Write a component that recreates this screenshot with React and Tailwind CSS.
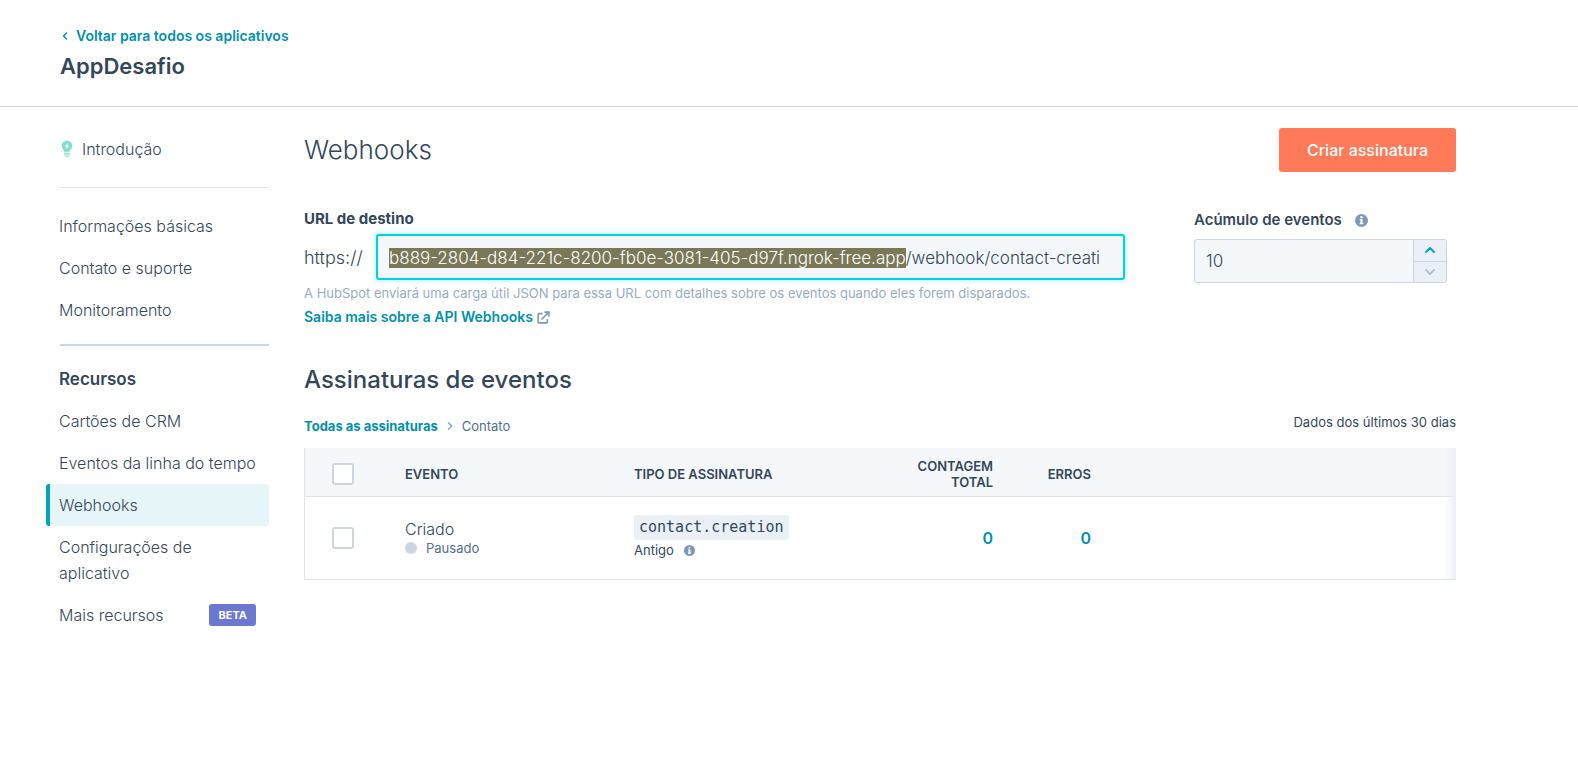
import { useEffect, useRef } from "react";

const selectedHost = "b889-2804-d84-221c-8200-fb0e-3081-405-d97f.ngrok-free.app";
const path = "/webhook/contact-creati";

function InfoIcon({ className }) {
  return (
    <svg viewBox="0 0 14 14" className={className} aria-hidden="true">
      <circle cx="7" cy="7" r="7" fill="#7c98b6" />
      <circle cx="7" cy="3.5" r="1.3" fill="#fff" />
      <path d="M5 5.600h3.100v4h.9V11H5V9.600h.9V7H5z" fill="#fff" />
    </svg>
  );
}

function BulbIcon() {
  return (
    <svg viewBox="0 0 12 18" className="h-[18px] w-3" aria-hidden="true">
      <path
        d="M6 .5A5.200 5.200 0 0 0 .8 5.700c0 1.800.9 3 1.700 4 .5.7.7 1.300.8 2.100h5.400c.1-.8.300-1.400.8-2.100.8-1 1.700-2.200 1.700-4A5.200 5.200 0 0 0 6 .5z"
        fill="#7fded2"
      />
      <path d="M6.900 2.900 3.700 6.500h1.900L5.100 9.300l3.200-3.700H6.400z" fill="#fff" />
      <path d="M3.400 13.300h5.200M3.400 15h5.200M5 16.700h2" stroke="#7fded2" strokeWidth="1.100" strokeLinecap="round" />
    </svg>
  );
}

function ExternalIcon() {
  return (
    <svg viewBox="0 0 14 14" className="h-[13px] w-[13px]" fill="none" stroke="#7c98b6" strokeWidth="1.700" aria-hidden="true">
      <path d="M6 2.800H2.200a1 1 0 0 0-1 1v8a1 1 0 0 0 1 1h8a1 1 0 0 0 1-1V8.500" />
      <path d="M4.800 9.200 12 2" />
      <path d="M8 1.200h4.900v4.900" />
    </svg>
  );
}

function Chevron({ d, className }) {
  return (
    <svg viewBox="0 0 12 12" className={className} fill="none" stroke="currentColor" aria-hidden="true">
      <path d={d} strokeLinecap="round" strokeLinejoin="round" />
    </svg>
  );
}

function NavLink({ children, active, badge }) {
  return (
    <a
      href="#"
      aria-current={active ? "page" : undefined}
      className={
        active
          ? "flex items-center rounded-[3px] border-l-4 border-[#00a4bd] bg-[#e5f5f8] py-2 pl-[9px] leading-[26px]"
          : "flex items-center justify-between py-2 pr-[13px] pl-[13px] leading-[26px]"
      }
    >
      <span>{children}</span>
      {badge && (
        <span className="rounded-[3px] bg-[#6a78d1] px-[9px] text-[11px] leading-[22px] font-bold text-white">{badge}</span>
      )}
    </a>
  );
}

function Checkbox({ label }) {
  return (
    <input
      type="checkbox"
      aria-label={label}
      className="block h-[22px] w-[22px] appearance-none rounded-[3px] border-2 border-[#cbd6e2] bg-white"
    />
  );
}

export default function App() {
  const urlRef = useRef(null);

  useEffect(() => {
    const el = urlRef.current;
    el.focus();
    el.setSelectionRange(0, selectedHost.length, "backward");
    el.scrollLeft = 0;
  }, []);

  return (
    <div className="bg-white font-['Inter','Open_Sans',sans-serif] text-base font-light text-[#33475b]">
      <header className="border-b border-[#cbd6e2] px-[60px] pt-6 pb-[26px]">
        <a href="#" className="flex items-center gap-1 text-sm leading-6 font-semibold text-[#0091ae]">
          <Chevron d="M6.500 3 3.500 6l3 3" className="h-3 w-3 stroke-[1.5]" />
          Voltar para todos os aplicativos
        </a>
        <h1 className="pt-1 text-[22px] leading-7 font-semibold">AppDesafio</h1>
      </header>

      <div className="flex gap-[35px] pr-[122px] pl-[46px]">
        <nav className="w-[223px] shrink-0 pt-[29px]" aria-label="Aplicativo">
          <a href="#" className="flex items-center gap-[9px] pl-[15px] leading-[26px]">
            <BulbIcon />
            Introdução
          </a>
          <hr className="mt-[25px] mb-[17px] ml-3.5 border-[#dfe3eb]" />
          <NavLink>Informações básicas</NavLink>
          <NavLink>Contato e suporte</NavLink>
          <NavLink>Monitoramento</NavLink>
          <hr className="mt-[13px] ml-3.5 border-t-2 border-[#cbd6e2]" />
          <h2 className="pt-5 pb-2 pl-[13px] text-[17px] leading-[26px] font-semibold">Recursos</h2>
          <NavLink>Cartões de CRM</NavLink>
          <NavLink>Eventos da linha do tempo</NavLink>
          <NavLink active>Webhooks</NavLink>
          <NavLink>
            Configurações de
            <br />
            aplicativo
          </NavLink>
          <NavLink badge="BETA">Mais recursos</NavLink>
        </nav>

        <main className="min-w-0 flex-1 pt-[21px]">
          <div className="flex items-center justify-between">
            <h2 className="text-[26px] leading-8">Webhooks</h2>
            <button type="button" className="h-11 rounded-[3px] bg-[#ff7a59] px-7 font-medium text-white">
              Criar assinatura
            </button>
          </div>

          <div className="flex items-start gap-[69px] pt-[35px]">
            <div className="min-w-0 flex-1">
              <label htmlFor="target-url" className="block text-[15px] leading-6 font-bold">
                URL de destino
              </label>
              <div className="flex items-center gap-2 pt-[3px]">
                <span className="w-16 pt-0.5 text-lg">https://</span>
                <input
                  id="target-url"
                  ref={urlRef}
                  type="text"
                  defaultValue={selectedHost + path}
                  className="h-[46px] min-w-0 flex-1 rounded-[3px] border-2 border-[#00d0e4] bg-[#f5f8fa] px-[11px] pt-0.5 text-[17px] shadow-[0_0_4px_1px_rgba(0,208,228,0.3)] outline-none selection:bg-[#7a7857] selection:text-white"
                />
              </div>
              <p className="pt-[3px] text-[13px] leading-5 font-normal text-[#99acc2]">
                A HubSpot enviará uma carga útil JSON para essa URL com detalhes sobre os eventos quando eles forem disparados.
              </p>
              <a href="#" className="mt-0.5 flex w-fit items-center gap-1 text-sm leading-6 font-semibold text-[#0091ae]">
                Saiba mais sobre a API Webhooks
                <ExternalIcon />
              </a>
            </div>

            <div className="w-[262px] shrink-0 pr-[9px]">
              <div className="flex items-center gap-[13px]">
                <label htmlFor="batch-size" className="text-[15px] leading-[26px] font-semibold">
                  Acúmulo de eventos
                </label>
                <InfoIcon className="h-[13px] w-[13px]" />
              </div>
              <div className="mt-1.5 flex h-11 overflow-hidden rounded-[3px] border border-[#cbd6e2] bg-[#f5f8fa]">
                <input id="batch-size" type="text" defaultValue="10" className="min-w-0 flex-1 px-[11px] pt-0.5 text-[17px] outline-none" />
                <div className="flex w-[33px] flex-col border-l border-[#cbd6e2] bg-[#eaf0f6]">
                  <button type="button" aria-label="Aumentar" className="flex flex-1 items-center justify-center border-b border-[#cbd6e2] text-[#00a4bd]">
                    <Chevron d="M2 8l4-4 4 4" className="h-3 w-3 stroke-2" />
                  </button>
                  <button type="button" aria-label="Diminuir" className="flex flex-1 items-center justify-center text-[#b0c1d4]">
                    <Chevron d="M2 4l4 4 4-4" className="h-3 w-3 stroke-2" />
                  </button>
                </div>
              </div>
            </div>
          </div>

          <h2 className="pt-[35px] text-2xl leading-8 font-medium">Assinaturas de eventos</h2>
          <div className="flex items-start justify-between pt-3.5 pb-2.5 text-[13px]">
            <div className="flex items-center gap-[7px] pt-1 leading-6">
              <a href="#" className="font-bold text-[#0091ae]">
                Todas as assinaturas
              </a>
              <Chevron d="M4 2l4 4-4 4" className="h-2.5 w-2.5 stroke-[1.5] text-[#7c98b6]" />
              <span className="font-normal text-[#516f90]">Contato</span>
            </div>
            <span className="leading-6 font-normal">Dados dos últimos 30 dias</span>
          </div>

          <div className="relative border-b border-l border-[#dfe3eb]">
            <table className="w-full table-fixed border-collapse text-left">
              <colgroup>
                <col className="w-[76px]" />
                <col className="w-[229px]" />
                <col className="w-[277px]" />
                <col className="w-[130px]" />
                <col className="w-[98px]" />
                <col />
              </colgroup>
              <thead>
                <tr className="h-12 border-b border-[#dfe3eb] bg-[#f5f8fa] text-[13px] leading-4">
                  <th className="pt-1 pl-[27px]">
                    <Checkbox label="Selecionar todas" />
                  </th>
                  <th className="px-6 pt-1 font-semibold">EVENTO</th>
                  <th className="px-6 pt-1 font-semibold">TIPO DE ASSINATURA</th>
                  <th className="px-6 pt-1 text-right font-semibold">
                    CONTAGEM
                    <br />
                    TOTAL
                  </th>
                  <th className="px-6 pt-1 text-right font-semibold">ERROS</th>
                  <th aria-label="Ações" />
                </tr>
              </thead>
              <tbody>
                <tr className="h-[83px]">
                  <td className="pl-[27px]">
                    <Checkbox label="Selecionar Criado" />
                  </td>
                  <td className="px-6">
                    <div className="leading-5">Criado</div>
                    <div className="flex items-center gap-[9px] text-[13px] leading-[18px] font-normal text-[#516f90]">
                      <span className="h-3 w-3 rounded-full bg-[#cbd6e2]" />
                      Pausado
                    </div>
                  </td>
                  <td className="px-6">
                    <code className="block w-fit rounded-[3px] bg-[#eaf0f6] px-[5px] font-['DejaVu_Sans_Mono',monospace] text-[15px] leading-[25px] font-normal">
                      contact.creation
                    </code>
                    <div className="flex items-center gap-2.5 text-[13px] leading-5 font-normal">
                      Antigo
                      <InfoIcon className="h-[11px] w-[11px]" />
                    </div>
                  </td>
                  <td className="px-6 text-right">
                    <a href="#" className="font-semibold text-[#0091ae]">0</a>
                  </td>
                  <td className="px-6 text-right">
                    <a href="#" className="font-semibold text-[#0091ae]">0</a>
                  </td>
                  <td />
                </tr>
              </tbody>
            </table>
            <div className="pointer-events-none absolute inset-y-0 right-0 w-3 bg-linear-to-r from-transparent to-[#eaf0f6]" />
          </div>
        </main>
      </div>
    </div>
  );
}
